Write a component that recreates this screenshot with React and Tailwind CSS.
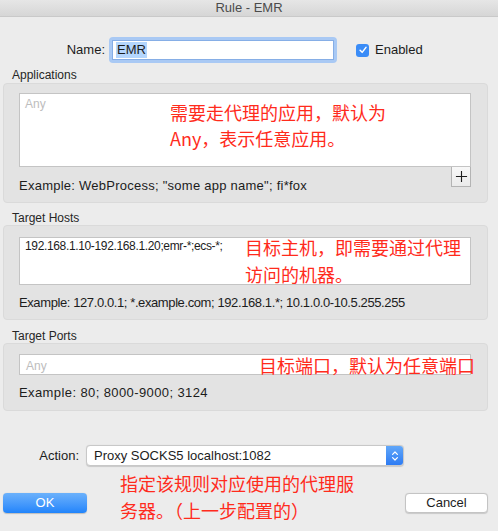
export default function App() {
  const red = "absolute text-[#ff2b1c] text-[18px] font-['Noto_Sans_CJK_SC',sans-serif] whitespace-nowrap"

  return (
    <div className="w-[498px] h-[531px] bg-[#ececec] font-['Liberation_Sans',sans-serif] text-[13px] text-[#1c1c1c] overflow-hidden">
      {/* Title bar */}
      <div className="h-[17px] border-b border-[#c9c9c9] bg-gradient-to-b from-[#e6e6e6] to-[#d6d6d6] flex items-center justify-center leading-none text-[#4b4b4b] pb-[2px]">
        Rule - EMR
      </div>

      {/* Name row */}
      <div className="mt-[20px] flex items-center h-[26px]">
        <div className="w-[105px] text-right">Name:</div>
        <div className="ml-[4px] w-[228px] h-[26px] rounded-[4px] bg-[#a9c9f4] p-[3px]">
          <div className="h-full bg-white border border-[#86aee6] flex items-center px-[3px]">
            <span className="bg-[#b4d6fd] leading-[16px] px-[1px]">EMR</span>
          </div>
        </div>
        <div className="ml-[19px] w-[13px] h-[13px] rounded-[3px] bg-[#3a8cf7] flex items-center justify-center">
          <svg viewBox="0 0 12 12" className="w-[10px] h-[10px]" fill="none" stroke="white" strokeWidth="1.8" strokeLinecap="round" strokeLinejoin="round">
            <path d="M2.5 6.3 L5 8.8 L9.6 2.8" />
          </svg>
        </div>
        <div className="ml-[6px]">Enabled</div>
      </div>

      {/* Applications */}
      <div className="mt-[5px] pl-[12px] text-[12px] leading-[14px] text-[#262626]">Applications</div>
      <div className="mt-[1px] mx-[3px] w-[485px] bg-[#e3e3e3] border border-[#dadada] rounded-[4px] pt-[9px] pl-[15px] pb-[9px]">
        <div className="relative w-[452px] h-[74px] bg-white border border-[#c4c4c4]">
          <div className="absolute left-[5px] top-[1px] text-[12px] text-[#bdbdbd]">Any</div>
          <div className={`${red} left-[150px] top-[5px] leading-[26px]`}>
            需要走代理的应用，默认为
            <br />
            Any，表示任意应用。
          </div>
        </div>
        <div className="flex items-start w-[452px] h-[26px]">
          <div className="mt-[12px] leading-[14px] tracking-[0.25px]">Example: WebProcess; "some app name"; fi*fox</div>
          <div className="ml-auto w-[20px] h-[20px] border border-[#b4b4b4] border-t-0 bg-gradient-to-b from-[#f8f8f8] to-[#ebebeb] flex items-center justify-center">
            <svg viewBox="0 0 14 14" className="w-[13px] h-[13px]" stroke="#1e1e1e" strokeWidth="1.2">
              <path d="M7 1 V13 M1 7 H13" />
            </svg>
          </div>
        </div>
      </div>

      {/* Target Hosts */}
      <div className="mt-[8px] pl-[12px] text-[12px] leading-[14px] text-[#262626]">Target Hosts</div>
      <div className="mx-[3px] w-[485px] bg-[#e3e3e3] border border-[#dadada] rounded-[4px] pt-[11px] pl-[15px] pb-[9px]">
        <div className="relative w-[452px] h-[48px] bg-white border border-[#c4c4c4]">
          <div className="absolute left-[5px] top-[1px] leading-[14px] text-[12px] tracking-[-0.35px]">192.168.1.10-192.168.1.20;emr-*;ecs-*;</div>
          <div className={`${red} left-[225px] top-[-4px] leading-[27px]`}>
            目标主机，即需要通过代理
            <br />
            访问的机器。
          </div>
        </div>
        <div className="mt-[11px] leading-[14px] tracking-[-0.4px]">Example: 127.0.0.1; *.example.com; 192.168.1.*; 10.1.0.0-10.5.255.255</div>
      </div>

      {/* Target Ports */}
      <div className="mt-[9px] pl-[12px] text-[12px] leading-[14px] text-[#262626]">Target Ports</div>
      <div className="mx-[3px] w-[485px] bg-[#e3e3e3] border border-[#dadada] rounded-[4px] pt-[10px] pl-[15px] pb-[10px]">
        <div className="relative w-[452px] h-[21px] bg-white border border-[#c4c4c4]">
          <div className="absolute left-[6px] top-[2px] text-[12px] text-[#bdbdbd]">Any</div>
          <div className={`${red} left-[239px] top-[-2px] leading-[24px]`}>目标端口，默认为任意端口</div>
        </div>
        <div className="mt-[11px] leading-[14px] tracking-[0.4px]">Example: 80; 8000-9000; 3124</div>
      </div>

      {/* Action */}
      <div className="mt-[34px] flex items-center h-[21px]">
        <div className="w-[79px] text-right">Action:</div>
        <div className="ml-[7px] w-[318px] h-[21px] bg-white border border-[#c8c8c8] rounded-[4px] shadow-[0_0.5px_1px_rgba(0,0,0,0.15)] flex items-center overflow-hidden">
          <div className="pl-[7px] flex-1">Proxy SOCKS5 localhost:1082</div>
          <div className="w-[17px] h-full bg-gradient-to-b from-[#61a7f9] to-[#2d7bf3] flex items-center justify-center">
            <svg viewBox="0 0 10 14" className="w-[8px] h-[12px]" fill="none" stroke="white" strokeWidth="1.5" strokeLinecap="round" strokeLinejoin="round">
              <path d="M2 5 L5 2 L8 5 M2 9 L5 12 L8 9" />
            </svg>
          </div>
        </div>
      </div>

      {/* Buttons */}
      <div className="relative mt-[27px] mx-[3px] w-[485px] flex justify-between">
        <div className={`${red} left-[117px] top-[-23px] leading-[27px]`}>
          指定该规则对应使用的代理服
          <br />
          务器。（上一步配置的）
        </div>
        <div className="w-[84px] h-[20px] rounded-[4px] bg-gradient-to-b from-[#6bb1fb] to-[#1f84fb] shadow-[0_0.5px_1px_rgba(0,0,0,0.2)] text-white flex items-center justify-center">
          OK
        </div>
        <div className="w-[83px] h-[20px] rounded-[4px] bg-white border border-[#c4c4c4] shadow-[0_0.5px_1px_rgba(0,0,0,0.15)] flex items-center justify-center">
          Cancel
        </div>
      </div>
    </div>
  )
}
